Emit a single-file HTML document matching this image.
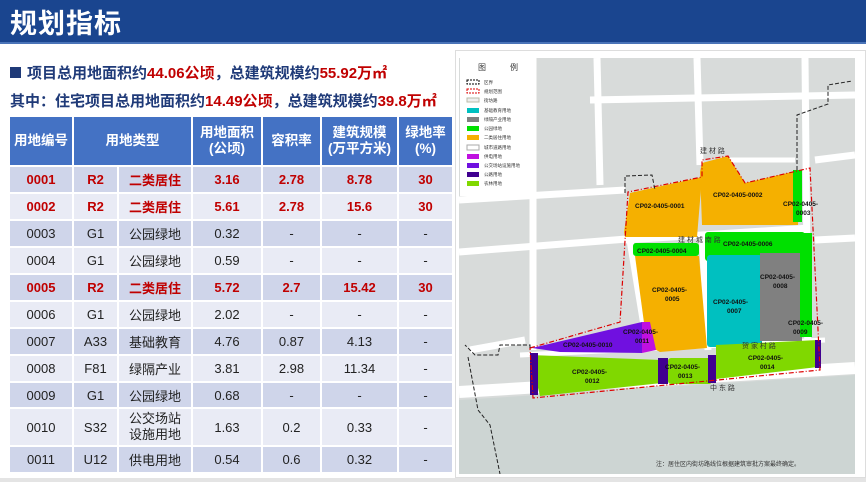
<!DOCTYPE html>
<html><head><meta charset="utf-8"><style>
*{margin:0;padding:0;box-sizing:border-box}
body{width:866px;height:482px;overflow:hidden;background:#fff;font-family:"Liberation Sans","Noto Sans CJK SC",sans-serif;position:relative}
.bar{position:absolute;left:0;top:0;width:866px;height:42px;background:#1a458f}
.bar h1{position:absolute;left:10px;top:2px;color:#fff;font-size:27px;font-weight:bold;letter-spacing:1px}
.bar2{position:absolute;left:0;top:42px;width:866px;height:2px;background:#4a74b8}
.l1{position:absolute;left:10px;top:62px;font-size:15px;font-weight:bold;color:#1f3a78;white-space:nowrap}
.l2{position:absolute;left:10px;top:90px;font-size:15px;font-weight:bold;color:#1f3a78;white-space:nowrap}
.r{color:#c00000}
.sq{display:inline-block;width:11px;height:11px;background:#1f3a78;margin-right:6px}
table{position:absolute;left:8px;top:115px;width:444px;border-collapse:collapse;table-layout:fixed}
td,th{border:2px solid #fff;text-align:center;font-size:13px;color:#222;padding:0}
th{background:#4472c4;color:#fff;font-weight:bold;height:50px;line-height:16px;font-size:13.5px}
tr.o td{background:#cfd5ea}
tr.e td{background:#e9ebf5}
tr.red td{color:#c00000;font-weight:bold}
.bot{position:absolute;left:0;top:478px;width:866px;height:4px;background:#e4e4e4}
.map{position:absolute;left:459px;top:58px}
.mapframe{position:absolute;left:455px;top:50px;width:411px;height:428px;border:1px solid #ddd}
</style></head><body>
<div class="bar"><h1>规划指标</h1></div><div class="bar2"></div>
<div class="l1"><span class="sq"></span>项目总用地面积约<span class="r">44.06公顷</span>，总建筑规模约<span class="r">55.92万㎡</span></div>
<div class="l2">其中：住宅项目总用地面积约<span class="r">14.49公顷</span>，总建筑规模约<span class="r">39.8万㎡</span></div>
<table>
<colgroup><col style="width:64px"><col style="width:45px"><col style="width:74px"><col style="width:70px"><col style="width:59px"><col style="width:77px"><col style="width:55px"></colgroup>
<tr><th>用地编号</th><th colspan="2">用地类型</th><th>用地面积<br>(公顷)</th><th>容积率</th><th>建筑规模<br>(万平方米)</th><th>绿地率<br>(%)</th></tr>
<tr class="o red" style="height:27px"><td>0001</td><td>R2</td><td>二类居住</td><td>3.16</td><td>2.78</td><td>8.78</td><td>30</td></tr>
<tr class="e red" style="height:27px"><td>0002</td><td>R2</td><td>二类居住</td><td>5.61</td><td>2.78</td><td>15.6</td><td>30</td></tr>
<tr class="o" style="height:27px"><td>0003</td><td>G1</td><td>公园绿地</td><td>0.32</td><td>-</td><td>-</td><td>-</td></tr>
<tr class="e" style="height:27px"><td>0004</td><td>G1</td><td>公园绿地</td><td>0.59</td><td>-</td><td>-</td><td>-</td></tr>
<tr class="o red" style="height:27px"><td>0005</td><td>R2</td><td>二类居住</td><td>5.72</td><td>2.7</td><td>15.42</td><td>30</td></tr>
<tr class="e" style="height:27px"><td>0006</td><td>G1</td><td>公园绿地</td><td>2.02</td><td>-</td><td>-</td><td>-</td></tr>
<tr class="o" style="height:27px"><td>0007</td><td>A33</td><td>基础教育</td><td>4.76</td><td>0.87</td><td>4.13</td><td>-</td></tr>
<tr class="e" style="height:27px"><td>0008</td><td>F81</td><td>绿隔产业</td><td>3.81</td><td>2.98</td><td>11.34</td><td>-</td></tr>
<tr class="o" style="height:26px"><td>0009</td><td>G1</td><td>公园绿地</td><td>0.68</td><td>-</td><td>-</td><td>-</td></tr>
<tr class="e" style="height:38px"><td>0010</td><td>S32</td><td style="line-height:16px">公交场站<br>设施用地</td><td>1.63</td><td>0.2</td><td>0.33</td><td>-</td></tr>
<tr class="o" style="height:27px"><td>0011</td><td>U12</td><td>供电用地</td><td>0.54</td><td>0.6</td><td>0.32</td><td>-</td></tr>
</table>
<div class="mapframe"></div>
<svg class="map" width="396" height="416" viewBox="459 58 396 416" xmlns="http://www.w3.org/2000/svg" font-family="Liberation Sans, Noto Sans CJK SC, sans-serif">
<rect x="459" y="58" width="396" height="416" fill="#d8dbda"/>
<polygon points="459,400 855,375 855,474 459,474" fill="#cdd5d3"/>
<g stroke="#fff" stroke-width="7" fill="none">
<path d="M459 392 L855 368" stroke-width="12"/>
<path d="M459 252 L640 238"/><path d="M459 200 L625 190"/>
<path d="M533 58 L533 350"/><path d="M597 58 L600 185"/><path d="M697 58 L700 165"/>
<path d="M805 58 L808 370"/><path d="M815 160 L855 155"/><path d="M815 240 L855 238"/>
<path d="M590 100 L855 95"/><path d="M525 340 L470 350"/>
<path d="M630 240 L648 350"/><path d="M702 232 L708 350"/><path d="M625 240 L810 228"/>
<path d="M720 160 L795 160" stroke-width="5"/><path d="M520 355 L825 340" stroke-width="5"/>
</g>
<rect x="460" y="58" width="74" height="138" fill="#fff"/>
<text x="478" y="70" font-size="8" fill="#333">图</text><text x="510" y="70" font-size="8" fill="#333">例</text>
<g font-size="4.5" fill="#333">
<rect x="467" y="80" width="12" height="4" fill="#fff" stroke="#000" stroke-dasharray="2,1"/>
<rect x="467" y="89" width="12" height="4" fill="#fff" stroke="#d00" stroke-dasharray="2,1"/>
<rect x="467" y="98" width="12" height="4" fill="#eee" stroke="#bba"/>
<rect x="467" y="108" width="12" height="5" fill="#00c0c0"/>
<rect x="467" y="117" width="12" height="5" fill="#808080"/>
<rect x="467" y="126" width="12" height="5" fill="#00e000"/>
<rect x="467" y="135" width="12" height="5" fill="#f5b000"/>
<rect x="467" y="145" width="12" height="5" fill="#fff" stroke="#aaa"/>
<rect x="467" y="154" width="12" height="5" fill="#c010e0"/>
<rect x="467" y="163" width="12" height="5" fill="#7010e0"/>
<rect x="467" y="172" width="12" height="5" fill="#400090"/>
<rect x="467" y="181" width="12" height="5" fill="#80d800"/>
<text x="484" y="84">区界</text><text x="484" y="93">规划范围</text><text x="484" y="102">街坊路</text><text x="484" y="112">基础教育用地</text><text x="484" y="121">绿隔产业用地</text><text x="484" y="130">公园绿地</text><text x="484" y="139">二类居住用地</text><text x="484" y="149">城市道路用地</text><text x="484" y="158">供电用地</text><text x="484" y="167">公交场站设施用地</text><text x="484" y="176">公路用地</text><text x="484" y="185">农林用地</text>
</g>
<polygon points="630,193 702,177 697,237 625,237 624,232" fill="#f5b000"/>
<polygon points="700,172 702,163 728,156 745,183 800,170 798,225 702,225" fill="#f5b000"/>
<rect x="793" y="170" width="9" height="52" fill="#00e000"/>
<rect x="633" y="243" width="66" height="13" rx="3" fill="#00e000"/>
<polygon points="635,256 699,256 707,348 660,352 647,345" fill="#f5b000"/>
<rect x="705" y="232" width="100" height="29" rx="3" fill="#00e000"/>
<rect x="707" y="255" width="55" height="92" rx="3" fill="#00c0c0"/>
<rect x="760" y="253" width="42" height="88" fill="#808080"/>
<rect x="800" y="233" width="12" height="104" fill="#00e000"/>
<polygon points="532,348 642,322 642,353 560,352" fill="#7010e0"/>
<polygon points="642,322 650,322 656,350 642,353" fill="#c010e0"/>
<polygon points="530,355 662,360 662,383 540,396" fill="#80d800"/>
<rect x="530" y="353" width="8" height="42" fill="#400090"/>
<rect x="658" y="358" width="10" height="26" fill="#400090"/>
<rect x="668" y="358" width="44" height="26" rx="3" fill="#80d800"/>
<rect x="708" y="355" width="8" height="28" fill="#400090"/>
<polygon points="716,345 818,340 818,367 716,379" fill="#80d800"/>
<rect x="815" y="340" width="6" height="28" fill="#400090"/>
<path d="M530 348 L620 322 L628 192 L702 177 L702 160 L728 156 L745 183 L810 168 L820 370 L533 398 Z" fill="none" stroke="#d00" stroke-width="1.2" stroke-dasharray="5,2,1,2"/>
<path d="M625 193 L625 176 L652 175 L655 190 M797 170 L797 115 L828 104 L828 85 L852 81 M530 348 L530 345 L500 345 L498 355 L475 355 L465 345 M468 357 L478 410 L490 425 L500 474" fill="none" stroke="#222" stroke-width="1" stroke-dasharray="4,2"/>
<g font-size="6.5" font-weight="bold" fill="#111">
<text x="635" y="208">CP02-0405-0001</text><text x="713" y="197">CP02-0405-0002</text>
<text x="783" y="206">CP02-0405-</text><text x="796" y="215">0003</text>
<text x="637" y="253">CP02-0405-0004</text><text x="723" y="246">CP02-0405-0006</text>
<text x="652" y="292">CP02-0405-</text><text x="665" y="301">0005</text>
<text x="713" y="304">CP02-0405-</text><text x="727" y="313">0007</text>
<text x="760" y="279">CP02-0405-</text><text x="773" y="288">0008</text>
<text x="788" y="325">CP02-0405-</text><text x="793" y="334">0009</text>
<text x="563" y="347">CP02-0405-0010</text>
<text x="623" y="334">CP02-0405-</text><text x="635" y="343">0011</text>
<text x="572" y="374">CP02-0405-</text><text x="585" y="383">0012</text>
<text x="665" y="369">CP02-0405-</text><text x="678" y="378">0013</text>
<text x="748" y="360">CP02-0405-</text><text x="760" y="369">0014</text>
</g>
<g font-size="7" fill="#333">
<text x="700" y="153">建 材 路</text><text x="678" y="242">建 材 城 南 路</text><text x="742" y="348">贺 家 村 路</text><text x="710" y="390">中 东 路</text>
</g>
<text x="656" y="466" font-size="6" fill="#333">注：居住区内街坊路线位根据建筑审批方案最终确定。</text>
</svg>
<div class="bot"></div>
</body></html>
